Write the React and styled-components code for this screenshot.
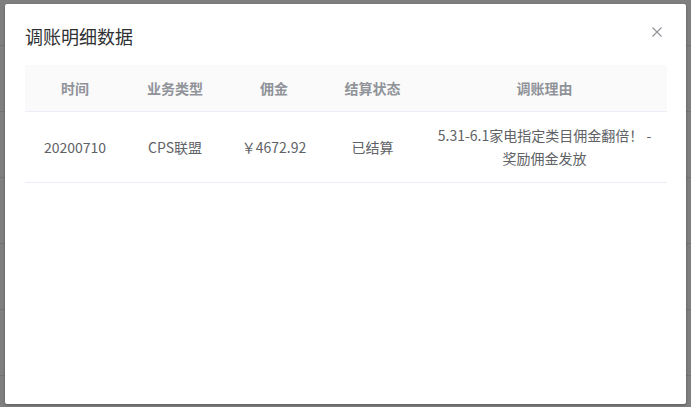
import React from "react";
import styled, { createGlobalStyle } from "styled-components";

const GlobalStyle = createGlobalStyle`
  html, body { margin: 0; padding: 0; }
  body {
    font-family: "Noto Sans CJK SC", "Noto Sans", sans-serif;
    background: #ffffff;
    overflow: hidden;
  }
`;

const Page = styled.div`
  width: 691px;
  height: 407px;
  position: relative;
  overflow: hidden;
  background: #fff;
`;

const BgTable = styled.div`
  display: flex;
  flex-direction: column;
  padding-top: 45px;
`;

const BgRow = styled.div`
  height: 66px;
  border-top: 1px solid #e6e6e6;
  box-sizing: border-box;
  display: grid;
  grid-template-columns: 60px 240px 230px 1fr;
  align-items: end;
  font-size: 14px;
  color: #606266;
  line-height: 20px;
`;

const BgCell = styled.span`
  transform: translateY(${(p) => p.$shift || 0}px);
`;

const Overlay = styled.div`
  position: absolute;
  inset: 0;
  background: rgba(0, 0, 0, 0.5);
`;

const Dialog = styled.div`
  position: absolute;
  left: 5px;
  top: 4px;
  width: 681px;
  height: 400px;
  background: #fff;
  border-radius: 2px;
  box-shadow: 0 1px 3px rgba(0, 0, 0, 0.3);
  display: flex;
  flex-direction: column;
  box-sizing: border-box;
`;

const Header = styled.div`
  padding: 20px 20px 10px;
  position: relative;
`;

const Title = styled.span`
  font-size: 18px;
  line-height: 24px;
  color: #303133;
`;

const CloseBtn = styled.button`
  position: absolute;
  top: 23px;
  right: 24px;
  width: 10px;
  height: 10px;
  padding: 0;
  border: none;
  background: transparent;
  display: flex;
  cursor: pointer;
`;

const Body = styled.div`
  padding: 6px 20px 20px;
`;

const Table = styled.div`
  width: 642px;
  display: grid;
  grid-template-columns: 100px 100px 98px 99px 245px;
  font-size: 14px;
`;

const HeadCell = styled.div`
  background: #fafafa;
  color: #909399;
  font-weight: bold;
  line-height: 22px;
  padding: 12px 10px;
  text-align: center;
  border-bottom: 1px solid #ebeef5;
`;

const Cell = styled.div`
  color: #606266;
  line-height: 23px;
  padding: 12px ${(p) => (p.$wide ? 12 : 10)}px;
  text-align: center;
  border-bottom: 1px solid #ebeef5;
  display: flex;
  align-items: center;
  justify-content: center;
`;

const headers = ["时间", "业务类型", "佣金", "结算状态", "调账理由"];
const row = ["20200710", "CPS联盟", "￥4672.92", "已结算", "5.31-6.1家电指定类目佣金翻倍！ - 奖励佣金发放"];

export default function App() {
  return (
    <>
      <GlobalStyle />
      <Page>
        <BgTable>
          <BgRow />
          <BgRow />
          <BgRow />
          <BgRow />
          <BgRow />
          <BgRow>
            <span />
            <BgCell $shift={12}>CPS联盟</BgCell>
            <BgCell $shift={12}>推广佣金</BgCell>
            <BgCell $shift={12}>未结算</BgCell>
          </BgRow>
        </BgTable>
        <Overlay />
        <Dialog>
          <Header>
            <Title>调账明细数据</Title>
            <CloseBtn aria-label="close">
              <svg width="10" height="10" viewBox="0 0 10 10">
                <path d="M0.5 0.5 L9.5 9.5 M9.5 0.5 L0.5 9.5" stroke="#909399" strokeWidth="1.1" fill="none" />
              </svg>
            </CloseBtn>
          </Header>
          <Body>
            <Table>
              {headers.map((h) => (
                <HeadCell key={h}>{h}</HeadCell>
              ))}
              {row.map((c, i) => (
                <Cell key={i} $wide={i === 4}>
                  {c}
                </Cell>
              ))}
            </Table>
          </Body>
        </Dialog>
      </Page>
    </>
  );
}
